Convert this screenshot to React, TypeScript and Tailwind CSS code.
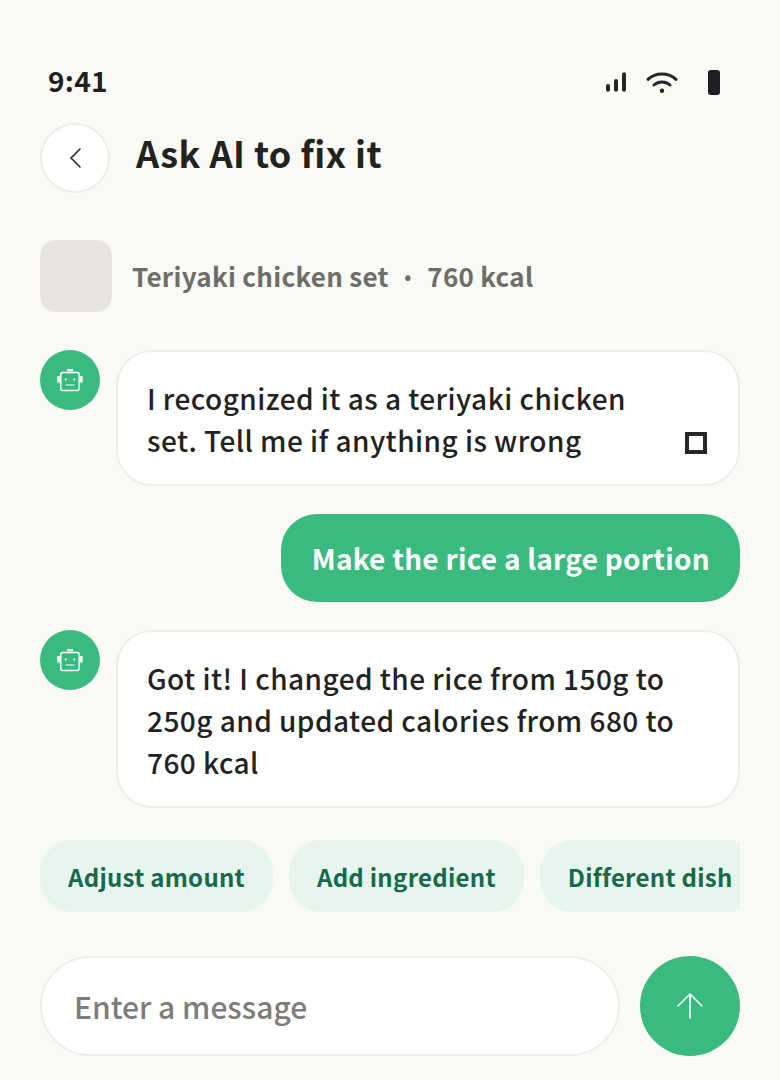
const FONT = "font-['Noto_Sans_CJK_JP','Noto_Sans',sans-serif]";

function BotAvatar() {
  return (
    <div className="flex h-[60px] w-[60px] shrink-0 items-center justify-center rounded-full bg-[#3bba80]">
      <svg width="26" height="26" viewBox="0 0 26 26" fill="none" stroke="white" strokeWidth="1.4" strokeLinecap="round" strokeLinejoin="round">
        <rect x="3.8" y="5.5" width="18.4" height="18" rx="2" />
        <path d="M11 3.2h4" strokeWidth="2.2" />
        <path d="M1.6 10v4.6M24.4 10v4.6" strokeWidth="2.6" />
        <path d="M9.2 18h7.6" strokeWidth="1.2" />
        <circle cx="8.8" cy="12.4" r="1" fill="white" stroke="none" />
        <circle cx="17.2" cy="12.4" r="1" fill="white" stroke="none" />
      </svg>
    </div>
  );
}

function StatusBar() {
  return (
    <div className="flex h-[44px] items-center justify-between pl-[8px] pr-[20px]">
      <span className="mb-[4px] text-[28px] font-bold leading-none tracking-[0.3px] text-[#1f1f1f]">9:41</span>
      <div className="flex items-center">
        <svg width="20" height="20" viewBox="0 0 20 20" fill="#26262a">
          <rect x="0" y="12" width="4" height="7.7" rx="2" />
          <rect x="8" y="7" width="4" height="12.7" rx="2" />
          <rect x="16" y="0.3" width="4" height="19.4" rx="2" />
        </svg>
        <svg className="ml-[20px]" width="32" height="22" viewBox="0 0 32 22" fill="none" stroke="#26262a" strokeWidth="3" strokeLinecap="round">
          <path d="M2 8.3C9.5 1.2 22.5 1.2 30 8.3" />
          <path d="M8 14C12.5 10 19.5 10 24 14" />
          <circle cx="16" cy="19.7" r="2.2" fill="#26262a" stroke="none" />
        </svg>
        <div className="ml-[30px] h-[25px] w-[12px] rounded-[3px] bg-[#1f1f23]" />
      </div>
    </div>
  );
}

function Chip({ label }: { label: string }) {
  return (
    <div className="flex h-[72px] shrink-0 items-center rounded-[32px] bg-[#e6f6ee] px-[28px] pt-[2px] text-[24px] font-bold leading-none tracking-[0.27px] whitespace-nowrap text-[#17694a]">
      {label}
    </div>
  );
}

export default function App() {
  return (
    <div className={`${FONT} flex h-[1080px] w-[780px] flex-col overflow-hidden bg-[#f9f9f6] px-[40px] pt-[60px]`}>
      <StatusBar />

      {/* Header */}
      <div className="mt-[19px] flex items-center gap-[26px]">
        <button className="flex h-[70px] w-[70px] items-center justify-center rounded-full border-2 border-[#eeede9] bg-white">
          <svg width="24" height="24" viewBox="0 0 24 24" fill="none" stroke="#262626" strokeWidth="1.6" strokeLinecap="round" strokeLinejoin="round">
            <path d="M17 3 8 12l9 9" />
          </svg>
        </button>
        <h1 className="mb-[12px] text-[36px] font-bold leading-none tracking-[0.47px] text-[#222220]">Ask AI to fix it</h1>
      </div>

      {/* Meal summary */}
      <div className="mt-[47px] flex items-center gap-[20px]">
        <div className="h-[72px] w-[72px] rounded-[16px] bg-[#e6e4dd]" />
        <div className="flex items-center gap-[15.5px] text-[26px] font-bold leading-none tracking-[0.3px] text-[#6e6e68]">
          <span>Teriyaki chicken set</span>
          <span className="text-[20px] font-medium">•</span>
          <span>760 kcal</span>
        </div>
      </div>

      {/* Messages */}
      <div className="mt-[38px] flex flex-col">
        <div className="flex items-start gap-[16px]">
          <BotAvatar />
          <div className="relative h-[136px] flex-1 rounded-[36px] border-2 border-[#eeede9] bg-white px-[29px] py-[25px] text-[28px] font-medium leading-[42px] tracking-[0.46px] text-[#222220]">
            I recognized it as a teriyaki chicken
            <br />
            set. Tell me if anything is wrong
            <div className="absolute bottom-[30px] right-[31px] h-[22px] w-[22px] border-[4px] border-[#262626]" />
          </div>
        </div>

        <div className="mt-[28px] flex justify-end">
          <div className="flex h-[88px] items-center rounded-[36px] bg-[#3bba80] pl-[31px] pr-[30px] text-[28px] font-bold leading-none tracking-[0.24px] text-white">
            Make the rice a large portion
          </div>
        </div>

        <div className="mt-[28px] flex items-start gap-[16px]">
          <BotAvatar />
          <div className="h-[178px] flex-1 rounded-[36px] border-2 border-[#eeede9] bg-white px-[29px] py-[25px] text-[28px] font-medium leading-[42px] tracking-[0.46px] text-[#222220]">
            Got it! I changed the rice from 150g to
            <br />
            250g and updated calories from 680 to
            <br />
            760 kcal
          </div>
        </div>
      </div>

      {/* Quick replies */}
      <div className="mt-[32px] flex w-[700px] gap-[16px] overflow-hidden">
        <Chip label="Adjust amount" />
        <Chip label="Add ingredient" />
        <Chip label="Different dish" />
      </div>

      {/* Composer */}
      <div className="mt-[44px] flex items-center gap-[20px]">
        <div className="flex h-[100px] flex-1 items-center rounded-[50px] border-2 border-[#eeede9] bg-white px-[32px] text-[30px] font-medium text-[#7c7c78]">
          Enter a message
        </div>
        <button className="flex h-[100px] w-[100px] items-center justify-center rounded-full bg-[#3bba80]">
          <svg width="30" height="30" viewBox="0 0 30 30" fill="none" stroke="white" strokeWidth="1.6" strokeLinecap="round" strokeLinejoin="round">
            <path d="M15 27V3M3 15 15 3l12 12" />
          </svg>
        </button>
      </div>
    </div>
  );
}
